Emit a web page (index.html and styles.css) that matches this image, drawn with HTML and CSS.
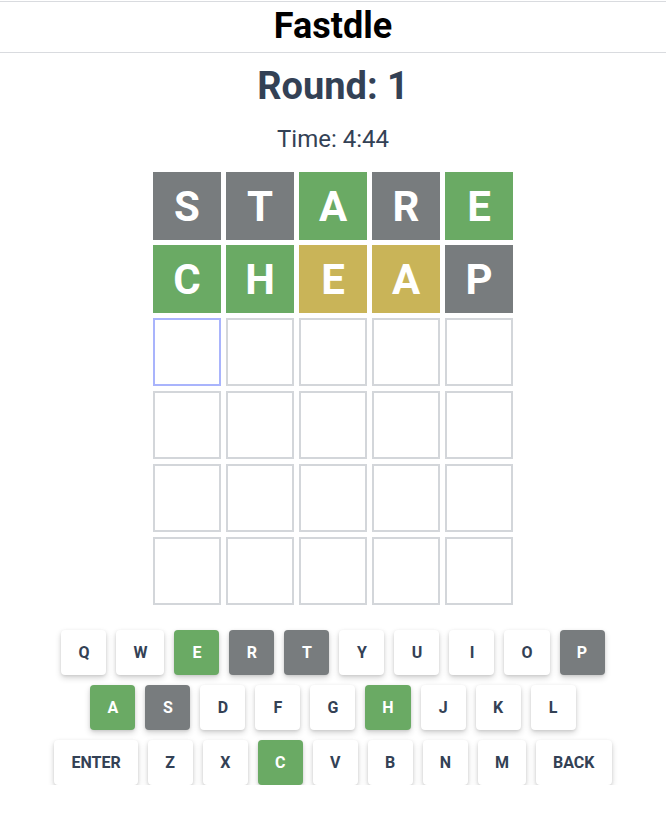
FILE: index.html
```html
<!DOCTYPE html>
<html>
<head>
<meta charset="utf-8">
<link rel="stylesheet" href="styles.css">
</head>
<body>
<header class="header"><h1 class="title">Fastdle</h1></header>
<main class="main">
  <h2 class="round">Round: 1</h2>
  <p class="time">Time: 4:44</p>
  <div class="grid">
    <div class="tile gray">S</div><div class="tile gray">T</div><div class="tile green">A</div><div class="tile gray">R</div><div class="tile green">E</div>
    <div class="tile green">C</div><div class="tile green">H</div><div class="tile yellow">E</div><div class="tile yellow">A</div><div class="tile gray">P</div>
    <div class="tile empty active"></div><div class="tile empty"></div><div class="tile empty"></div><div class="tile empty"></div><div class="tile empty"></div>
    <div class="tile empty"></div><div class="tile empty"></div><div class="tile empty"></div><div class="tile empty"></div><div class="tile empty"></div>
    <div class="tile empty"></div><div class="tile empty"></div><div class="tile empty"></div><div class="tile empty"></div><div class="tile empty"></div>
    <div class="tile empty"></div><div class="tile empty"></div><div class="tile empty"></div><div class="tile empty"></div><div class="tile empty"></div>
  </div>
  <div class="keyboard">
    <div class="krow">
      <button class="key">Q</button><button class="key">W</button><button class="key k-green">E</button><button class="key k-gray">R</button><button class="key k-gray">T</button><button class="key">Y</button><button class="key">U</button><button class="key">I</button><button class="key">O</button><button class="key k-gray">P</button>
    </div>
    <div class="krow">
      <button class="key k-green">A</button><button class="key k-gray">S</button><button class="key">D</button><button class="key">F</button><button class="key">G</button><button class="key k-green">H</button><button class="key">J</button><button class="key">K</button><button class="key">L</button>
    </div>
    <div class="krow">
      <button class="key">ENTER</button><button class="key">Z</button><button class="key">X</button><button class="key k-green">C</button><button class="key">V</button><button class="key">B</button><button class="key">N</button><button class="key">M</button><button class="key">BACK</button>
    </div>
  </div>
</main>
</body>
</html>
```
FILE: styles.css
```css
* { box-sizing: border-box; }
html, body { margin: 0; padding: 0; background: #fff; }
body { font-family: Roboto, "Liberation Sans", sans-serif; }
.header {
  margin-top: 1px;
  border-top: 1px solid #d9dbdf;
  border-bottom: 1px solid #d9dbdf;
  padding: 4px 0 6px;
  text-align: center;
}
.title {
  margin: 0;
  font-size: 36px;
  line-height: 40px;
  font-weight: 700;
  color: #000;
}
.main {
  display: flex;
  flex-direction: column;
  align-items: center;
}
.round {
  margin: 13px 0 0;
  font-size: 38px;
  line-height: 40px;
  font-weight: 700;
  color: #334155;
}
.time {
  margin: 17px 0 0;
  font-size: 24px;
  line-height: 32px;
  font-weight: 400;
  color: #334155;
}
.grid {
  margin-top: 17px;
  display: grid;
  grid-template-columns: repeat(5, 68px);
  grid-auto-rows: 68px;
  gap: 5px;
}
.tile {
  display: flex;
  align-items: center;
  justify-content: center;
  font-size: 42px;
  font-weight: 700;
  color: #fff;
}
.gray { background: #787c7e; }
.green { background: #6aaa64; }
.yellow { background: #c9b458; }
.empty { border: 2px solid #d3d6da; }
.empty.active { border-color: #a9b4fc; }
.keyboard {
  margin-top: 25px;
  display: flex;
  flex-direction: column;
  align-items: center;
  gap: 10px;
}
.krow {
  display: flex;
  gap: 10px;
}
.key {
  height: 45px;
  min-width: 45px;
  padding: 0 17px;
  border: none;
  border-radius: 4px;
  background: #fff;
  color: #334155;
  font-family: Roboto, "Liberation Sans", sans-serif;
  font-size: 16px;
  font-weight: 700;
  box-shadow: 0 3px 6px rgba(0, 0, 0, 0.16), 0 1px 3px rgba(0, 0, 0, 0.1);
}
.k-green { background: #6aaa64; color: #fff; }
.k-gray { background: #787c7e; color: #fff; }
```
